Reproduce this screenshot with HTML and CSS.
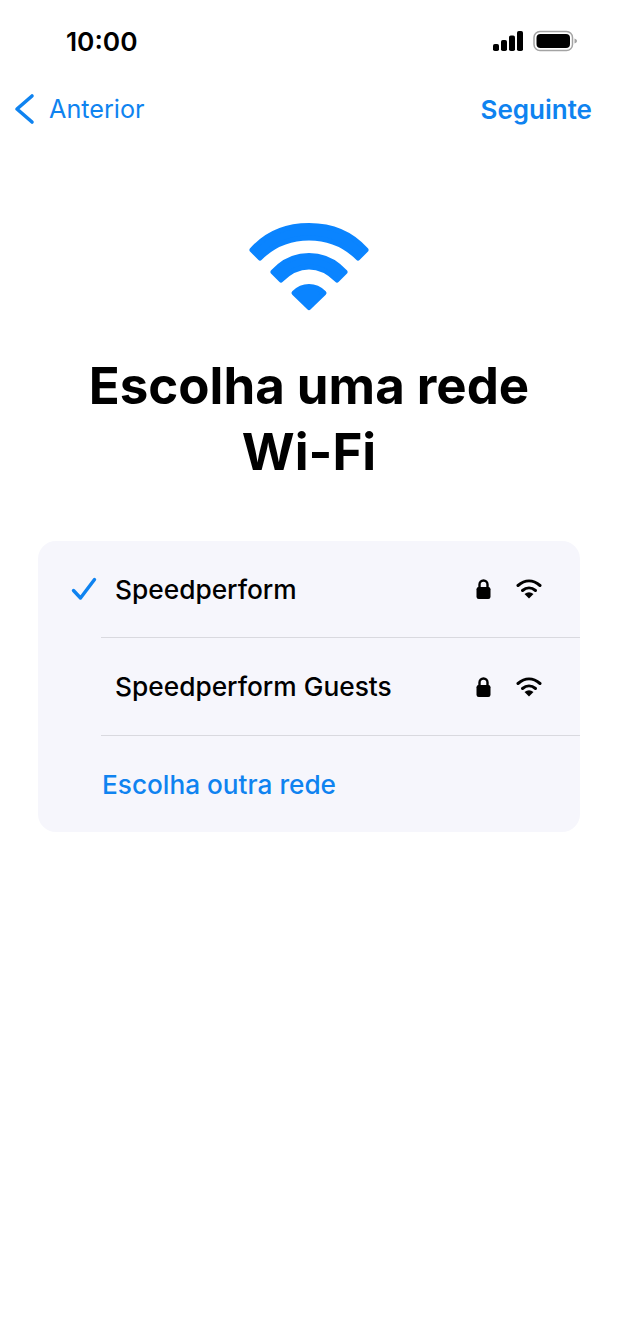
FILE: index.html
```html
<!DOCTYPE html>
<html lang="pt">
<head>
    <meta charset="UTF-8">
    <title>Escolha uma rede Wi-Fi</title>
    <link rel="stylesheet" href="styles.css">
</head>
<body>
<div class="status">
    <span class="time">10:00</span>
    <div class="status-icons">
        <svg width="30" height="20" viewBox="0 0 30 20">
            <rect x="0" y="13" width="6" height="7" rx="1.800"/>
            <rect x="8" y="9" width="6" height="11" rx="1.800"/>
            <rect x="16" y="4.500" width="6" height="15.500" rx="1.800"/>
            <rect x="24" y="0" width="6" height="20" rx="1.800"/>
        </svg>
        <svg width="45" height="22" viewBox="0 0 45 22">
            <rect x="1" y="1.500" width="38.500" height="19" rx="6" fill="none" stroke="#a3a3a3" stroke-width="1.500"/>
            <rect x="3.500" y="4" width="33.500" height="14" rx="4"/>
            <path d="M41.500 8.500c1.500.4 2.500 1.400 2.500 2.500s-1 2.100-2.500 2.500z" fill="#a3a3a3"/>
        </svg>
    </div>
</div>

<div class="nav">
    <a class="back" href="#">
        <svg width="22" height="32" viewBox="0 0 22 32">
            <path d="M19 3 4 16l15 13" fill="none" stroke="#0f83f0" stroke-width="3.600" stroke-linecap="round" stroke-linejoin="round"/>
        </svg>
        Anterior
    </a>
    <a class="next" href="#">Seguinte</a>
</div>

<svg class="hero" width="122" height="90" viewBox="0 0 122 90">
    <g fill="#0a84ff" stroke="#0a84ff" stroke-width="5" stroke-linejoin="round">
        <path d="M4 28C19 11 38 3.500 61 3.500S103 11 118 28l-8 8C97 23 80 16 61 16S25 23 12 36z"/>
        <path d="M25 50C35 39 47 33.500 61 33.500S87 39 97 50l-8 8C81 50 72 45 61 45S41 50 33 58z"/>
        <path d="M46 71C50 67 55 64.500 61 64.500S72 67 76 71L61 85.500z"/>
    </g>
</svg>

<h1 class="title">Escolha uma rede<br>Wi-Fi</h1>

<div class="card">
    <div class="row">
        <span class="tick">
            <svg width="26" height="24" viewBox="0 0 26 24">
                <path d="M2.500 13.500 9.500 21 23.500 2.500" fill="none" stroke="#0f83f0" stroke-width="3.400" stroke-linecap="round" stroke-linejoin="round"/>
            </svg>
        </span>
        <div class="row-body">
            <span class="name">Speedperform</span>
            <svg class="lock" width="15" height="20" viewBox="0 0 15 20">
                <path d="M3.500 9V5.500a4 4 0 0 1 8 0V9" fill="none" stroke="#000" stroke-width="2.400"/>
                <rect x="0.500" y="8" width="14" height="12" rx="2.200"/>
            </svg>
            <svg class="wifi" width="26" height="20" viewBox="0 0 26 20">
                <path d="M2 6.500C9 .5 17 .5 24 6.500" fill="none" stroke="#000" stroke-width="3" stroke-linecap="round"/>
                <path d="M6.500 11.500C10.500 8 15.500 8 19.500 11.500" fill="none" stroke="#000" stroke-width="3" stroke-linecap="round"/>
                <path d="M8.500 15C11.500 12.800 14.500 12.800 17.500 15L13 19.500z"/>
            </svg>
        </div>
    </div>
    <div class="row row-mid">
        <span class="tick"></span>
        <div class="row-body">
            <span class="name">Speedperform Guests</span>
            <svg class="lock" width="15" height="20" viewBox="0 0 15 20">
                <path d="M3.500 9V5.500a4 4 0 0 1 8 0V9" fill="none" stroke="#000" stroke-width="2.400"/>
                <rect x="0.500" y="8" width="14" height="12" rx="2.200"/>
            </svg>
            <svg class="wifi" width="26" height="20" viewBox="0 0 26 20">
                <path d="M2 6.500C9 .5 17 .5 24 6.500" fill="none" stroke="#000" stroke-width="3" stroke-linecap="round"/>
                <path d="M6.500 11.500C10.500 8 15.500 8 19.500 11.500" fill="none" stroke="#000" stroke-width="3" stroke-linecap="round"/>
                <path d="M8.500 15C11.500 12.800 14.500 12.800 17.500 15L13 19.500z"/>
            </svg>
        </div>
    </div>
    <div class="row row-last">
        <span class="tick"></span>
        <div class="row-body">
            <a class="other" href="#">Escolha outra rede</a>
        </div>
    </div>
</div>
</body>
</html>
```

FILE: styles.css
```css
* {
    margin: 0;
    padding: 0;
    box-sizing: border-box;
}

body {
    width: 618px;
    min-height: 1337px;
    background-color: #fff;
    color: #000;
    font-family: "Inter", "Liberation Sans", sans-serif;
    display: flex;
    flex-direction: column;
    align-items: center;
}

a {
    text-decoration: none;
}

.status {
    width: 100%;
    height: 82px;
    padding: 0 40px 0 66px;
    display: flex;
    justify-content: space-between;
    align-items: center;
}

.time {
    font-size: 26.300px;
    font-weight: 600;
}

.status-icons {
    display: flex;
    align-items: center;
    gap: 10px;
}

.nav {
    width: 100%;
    height: 54px;
    padding: 0 26px 0 13px;
    display: flex;
    justify-content: space-between;
    align-items: center;
}

.back {
    display: flex;
    align-items: center;
    gap: 14px;
    color: #0f83f0;
    font-size: 25.200px;
}

.next {
    color: #0f83f0;
    font-size: 26px;
    font-weight: 600;
}

.hero {
    margin-top: 86px;
}

.title {
    margin-top: 41px;
    font-size: 51px;
    line-height: 66px;
    font-weight: 700;
    text-align: center;
}

.card {
    width: 542px;
    margin-top: 56px;
    background-color: #f6f6fc;
    border-radius: 18px;
    overflow: hidden;
}

.row {
    height: 97px;
    display: flex;
}

.row-mid {
    height: 98px;
}

.row-last {
    height: 96px;
}

.tick {
    width: 63px;
    padding: 36px 0 0 33px;
}

.row-body {
    flex: 1;
    display: flex;
    align-items: center;
    padding-left: 1px;
    border-bottom: 1px solid #d9d9df;
}

.row-last .row-body {
    border-bottom: none;
}

.name {
    flex: 1;
    padding-left: 13px;
    font-size: 26.300px;
    font-weight: 500;
}

.lock {
    margin-right: 25px;
}

.wifi {
    margin-right: 38px;
}

.other {
    color: #0f83f0;
    font-size: 26.200px;
    font-weight: 500;
}
```
